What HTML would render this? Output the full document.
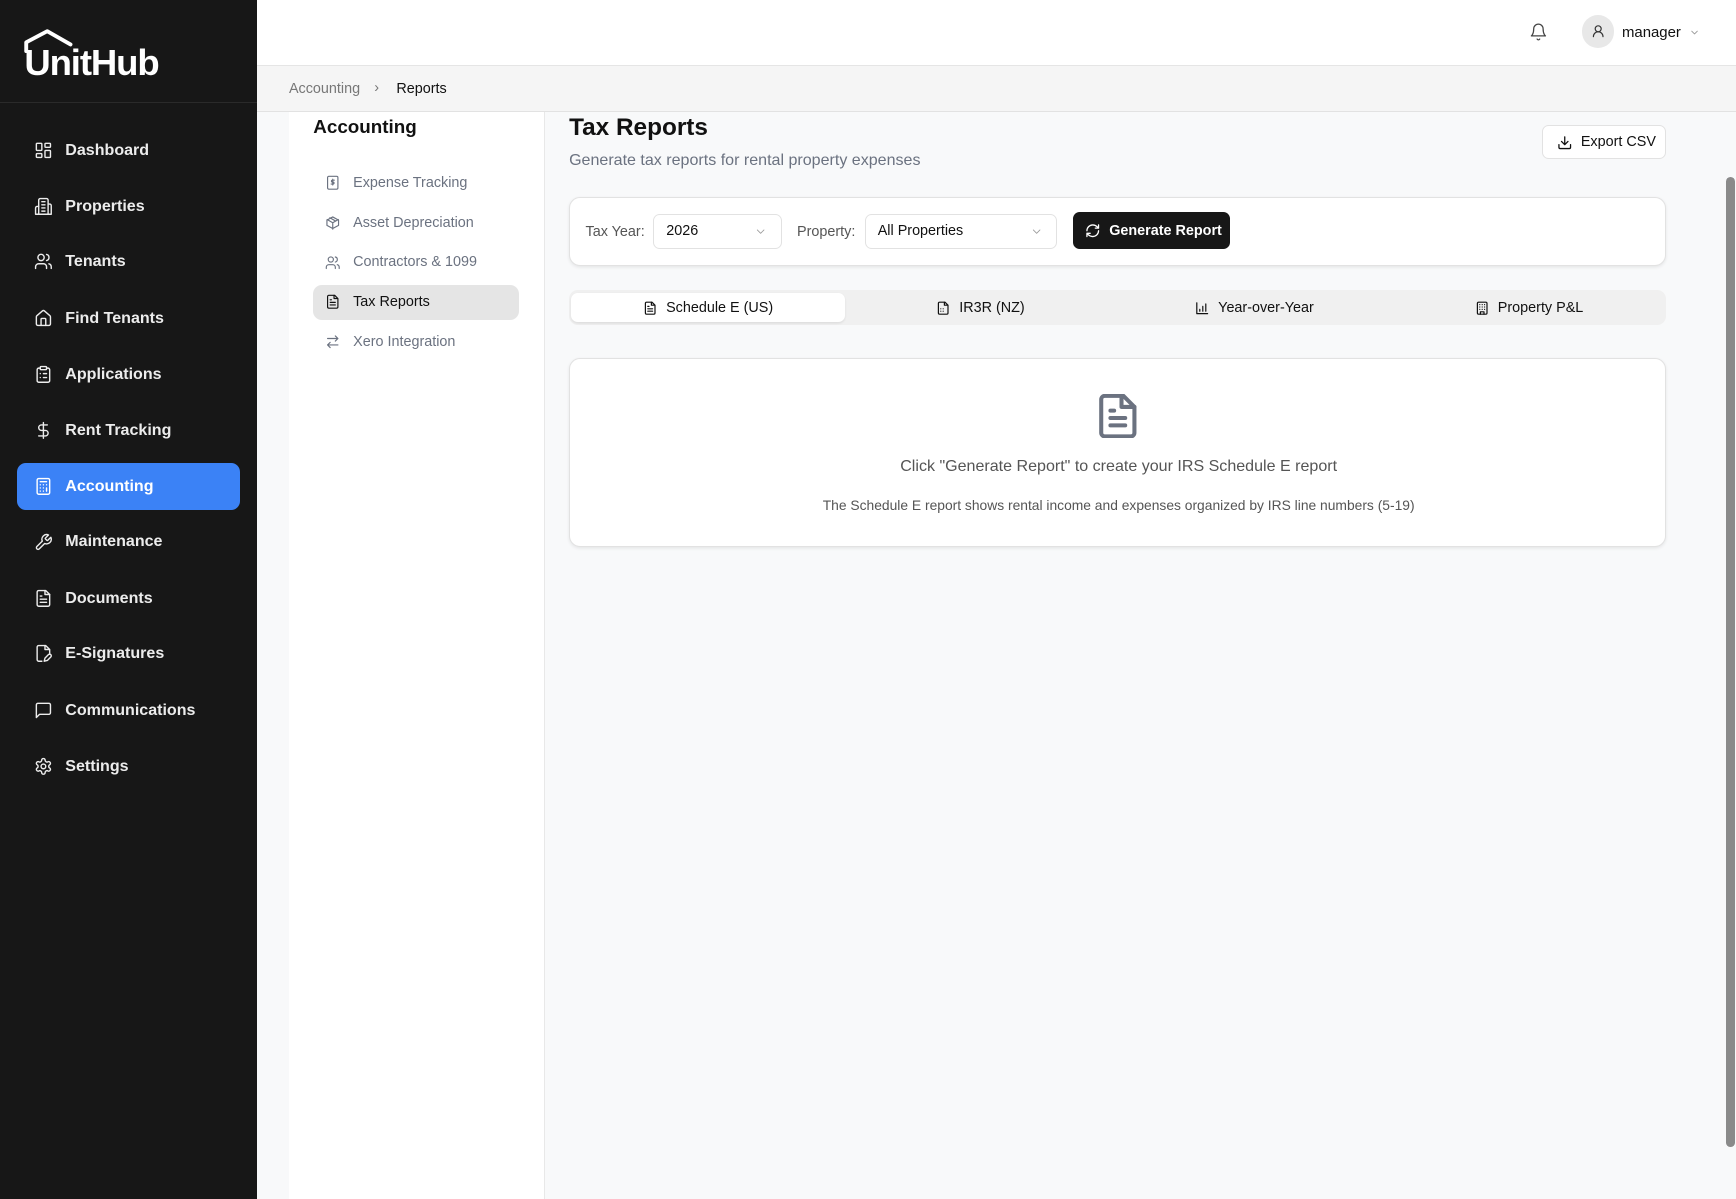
<!DOCTYPE html>
<html><head><meta charset="utf-8"><style>
html{zoom:1.10714}
*{box-sizing:border-box;margin:0;padding:0}
body{width:1568px;height:1083px;overflow:hidden;font-family:"Liberation Sans",sans-serif;background:#f8f9fa;position:relative;color:#111}
.abs{position:absolute}
svg{fill:none;stroke:currentColor;stroke-width:2;stroke-linecap:round;stroke-linejoin:round}
#sb{left:0;top:0;width:232px;height:1083px;background:#171717}
.logo{left:22px;top:38px;color:#fff;font-size:33px;font-weight:bold;letter-spacing:-1px}
.nav{left:15px;width:202px;height:43px;border-radius:8px;color:#ececec;font-size:14.5px;font-weight:bold;display:flex;align-items:center}
.nav svg{width:17px;height:17px;margin-left:16px;margin-right:11px;stroke-width:1.8}
.nav.act{background:#3b82f6;color:#fff}
#hd{left:232px;top:0;width:1336px;height:60px;background:#fff;border-bottom:1px solid #e5e5e5}
#bc{left:232px;top:60px;width:1336px;height:41px;background:#f5f5f5;border-bottom:1px solid #e2e2e2;font-size:13px}
#side2{left:261px;top:101px;width:231px;height:982px;background:#fff;border-right:1px solid #e8e8e8}
.si{left:22px;width:186px;height:32px;border-radius:8px;display:flex;align-items:center;font-size:13px;color:#6b7280}
.si svg{width:14px;height:14px;margin-left:11px;margin-right:11px;stroke-width:1.8}
.si.act{background:#e5e5e5;color:#111}
.card{background:#fff;border:1px solid #e2e2e2;border-radius:10px;box-shadow:0 1px 3px rgba(0,0,0,.08)}
.sel{height:32px;background:#fff;border:1px solid #e2e2e2;border-radius:6px;font-size:13px;display:flex;align-items:center;padding-left:11px}
.sel svg{position:absolute;right:12px;width:12px;height:12px;color:#999;stroke-width:1.5}
.tab{top:0;height:32px;display:flex;align-items:center;justify-content:center;font-size:13px;color:#111}
.tab svg{width:13px;height:13px;margin-right:8px;stroke-width:2}
</style></head><body>
<div id="sb" class="abs">
 <div class="abs logo">UnitHub</div>
 <svg class="abs" style="left:22px;top:26px;width:50px;height:22px;color:#fff;stroke-width:3.5" viewBox="0 0 50 22"><path d="M2 20 V12 L21 2 L42 14"/></svg>
 <div class="abs" style="left:0;top:92px;width:232px;height:1px;background:#2a2a2a"></div>
 <div class="abs nav" style="top:114px"><svg viewBox="0 0 24 24"><rect x="3" y="3" width="7" height="9" rx="1"/><rect x="14" y="3" width="7" height="5" rx="1"/><rect x="14" y="12" width="7" height="9" rx="1"/><rect x="3" y="16" width="7" height="5" rx="1"/></svg>Dashboard</div>
 <div class="abs nav" style="top:165px"><svg viewBox="0 0 24 24"><path d="M6 22V4a2 2 0 0 1 2-2h8a2 2 0 0 1 2 2v18Z"/><path d="M6 12H4a2 2 0 0 0-2 2v8h4M18 9h2a2 2 0 0 1 2 2v11h-4M10 6h4M10 10h4M10 14h4M10 18h4"/></svg>Properties</div>
 <div class="abs nav" style="top:215px"><svg viewBox="0 0 24 24"><path d="M16 21v-2a4 4 0 0 0-4-4H6a4 4 0 0 0-4 4v2"/><circle cx="9" cy="7" r="4"/><path d="M22 21v-2a4 4 0 0 0-3-3.9M16 3.1a4 4 0 0 1 0 7.8"/></svg>Tenants</div>
 <div class="abs nav" style="top:266px"><svg viewBox="0 0 24 24"><path d="M15 21v-8a1 1 0 0 0-1-1h-4a1 1 0 0 0-1 1v8"/><path d="M3 10a2 2 0 0 1 .7-1.5l7-6a2 2 0 0 1 2.6 0l7 6A2 2 0 0 1 21 10v9a2 2 0 0 1-2 2H5a2 2 0 0 1-2-2z"/></svg>Find Tenants</div>
 <div class="abs nav" style="top:317px"><svg viewBox="0 0 24 24"><rect x="8" y="2" width="8" height="4" rx="1"/><path d="M16 4h2a2 2 0 0 1 2 2v14a2 2 0 0 1-2 2H6a2 2 0 0 1-2-2V6a2 2 0 0 1 2-2h2M12 11h4M12 16h4M8 11h.01M8 16h.01"/></svg>Applications</div>
 <div class="abs nav" style="top:367px"><svg viewBox="0 0 24 24"><path d="M12 2v20M17 5H9.5a3.5 3.5 0 0 0 0 7h5a3.5 3.5 0 0 1 0 7H6"/></svg>Rent Tracking</div>
 <div class="abs nav act" style="top:418px"><svg viewBox="0 0 24 24"><rect x="4" y="2" width="16" height="20" rx="2"/><path d="M8 6h8M16 14v4M8 10h.01M12 10h.01M16 10h.01M8 14h.01M12 14h.01M8 18h.01M12 18h.01"/></svg>Accounting</div>
 <div class="abs nav" style="top:468px"><svg viewBox="0 0 24 24"><path d="M14.7 6.3a1 1 0 0 0 0 1.4l1.6 1.6a1 1 0 0 0 1.4 0l3.8-3.8a6 6 0 0 1-7.9 7.9l-6.9 6.9a2.1 2.1 0 0 1-3-3l6.9-6.9a6 6 0 0 1 7.9-7.9z"/></svg>Maintenance</div>
 <div class="abs nav" style="top:519px"><svg viewBox="0 0 24 24"><path d="M15 2H6a2 2 0 0 0-2 2v16a2 2 0 0 0 2 2h12a2 2 0 0 0 2-2V7Z"/><path d="M14 2v5h6M16 13H8M16 17H8M10 9H8"/></svg>Documents</div>
 <div class="abs nav" style="top:569px"><svg viewBox="0 0 24 24"><path d="M20 13V7l-5-5H6a2 2 0 0 0-2 2v16a2 2 0 0 0 2 2h4"/><path d="M14 2v5h5M18.4 13.6a2 2 0 1 1 3 3L17 21l-4 1 1-4Z"/></svg>E-Signatures</div>
 <div class="abs nav" style="top:620px"><svg viewBox="0 0 24 24"><path d="M21 15a2 2 0 0 1-2 2H7l-4 4V5a2 2 0 0 1 2-2h14a2 2 0 0 1 2 2z"/></svg>Communications</div>
 <div class="abs nav" style="top:671px"><svg viewBox="0 0 24 24"><circle cx="12" cy="12" r="3"/><path d="M12.2 2h-.4a2 2 0 0 0-2 2v.2a2 2 0 0 1-1 1.7l-.4.3a2 2 0 0 1-2 0l-.2-.1a2 2 0 0 0-2.7.7l-.2.4a2 2 0 0 0 .7 2.7l.2.1a2 2 0 0 1 1 1.7v.5a2 2 0 0 1-1 1.7l-.2.1a2 2 0 0 0-.7 2.7l.2.4a2 2 0 0 0 2.7.7l.2-.1a2 2 0 0 1 2 0l.4.3a2 2 0 0 1 1 1.7v.2a2 2 0 0 0 2 2h.4a2 2 0 0 0 2-2v-.2a2 2 0 0 1 1-1.7l.4-.3a2 2 0 0 1 2 0l.2.1a2 2 0 0 0 2.7-.7l.2-.4a2 2 0 0 0-.7-2.7l-.2-.1a2 2 0 0 1-1-1.7v-.5a2 2 0 0 1 1-1.7l.2-.1a2 2 0 0 0 .7-2.7l-.2-.4a2 2 0 0 0-2.7-.7l-.2.1a2 2 0 0 1-2 0l-.4-.3a2 2 0 0 1-1-1.7V4a2 2 0 0 0-2-2z"/></svg>Settings</div>
</div>
<div id="hd" class="abs">
 <svg class="abs" style="left:1149px;top:20px;width:17px;height:18px;color:#444;stroke-width:1.6" viewBox="0 0 24 24"><path d="M6 8a6 6 0 0 1 12 0c0 7 3 9 3 9H3s3-2 3-9M10.3 21a1.9 1.9 0 0 0 3.4 0"/></svg>
 <div class="abs" style="left:1197px;top:14px;width:29px;height:29px;border-radius:50%;background:#e8e8e8"></div>
 <svg class="abs" style="left:1205px;top:22px;width:13px;height:13px;color:#333;stroke-width:2" viewBox="0 0 24 24"><circle cx="12" cy="8" r="5"/><path d="M20 21a8 8 0 0 0-16 0"/></svg>
 <div class="abs" style="left:1233px;top:22px;font-size:13.5px;color:#111">manager</div>
 <svg class="abs" style="left:1294px;top:24px;width:10px;height:10px;color:#999;stroke-width:2" viewBox="0 0 24 24"><path d="m6 9 6 6 6-6"/></svg>
</div>
<div id="bc" class="abs">
 <span class="abs" style="left:29px;top:13px;color:#777">Accounting</span>
 <span class="abs" style="left:106px;top:12px;color:#777">›</span>
 <span class="abs" style="left:126px;top:13px;color:#111">Reports</span>
</div>
<div id="side2" class="abs">
 <div class="abs" style="left:22px;top:4px;font-size:17px;font-weight:bold">Accounting</div>
 <div class="abs si" style="top:48px"><svg viewBox="0 0 24 24"><rect x="4" y="2" width="16" height="20" rx="2"/><path d="M14.5 8h-3a1.5 1.5 0 0 0 0 3h1a1.5 1.5 0 0 1 0 3h-3M12 6.5v9"/></svg>Expense Tracking</div>
 <div class="abs si" style="top:84px"><svg viewBox="0 0 24 24"><path d="M21 8l-9-5-9 5v8l9 5 9-5zM3.3 7 12 12l8.7-5M12 22V12M7.5 4.3l9 5.1"/></svg>Asset Depreciation</div>
 <div class="abs si" style="top:120px"><svg viewBox="0 0 24 24"><path d="M16 21v-2a4 4 0 0 0-4-4H6a4 4 0 0 0-4 4v2"/><circle cx="9" cy="7" r="4"/><path d="M22 21v-2a4 4 0 0 0-3-3.9M16 3.1a4 4 0 0 1 0 7.8"/></svg>Contractors &amp; 1099</div>
 <div class="abs si act" style="top:156px"><svg viewBox="0 0 24 24"><path d="M15 2H6a2 2 0 0 0-2 2v16a2 2 0 0 0 2 2h12a2 2 0 0 0 2-2V7Z"/><path d="M14 2v5h5M16 13H8M16 17H8M10 9H8"/></svg>Tax Reports</div>
 <div class="abs si" style="top:192px"><svg viewBox="0 0 24 24"><path d="m16 3 4 4-4 4M20 7H4M8 21l-4-4 4-4M4 17h16"/></svg>Xero Integration</div>
</div>
<div class="abs" style="left:514px;top:103px;font-size:22px;font-weight:bold">Tax Reports</div>
<div class="abs" style="left:514px;top:136px;font-size:14.5px;color:#6b7280">Generate tax reports for rental property expenses</div>
<div class="abs card" style="left:1393px;top:113px;width:112px;height:31px;border-radius:6px;box-shadow:none;display:flex;align-items:center;font-size:13px">
 <svg style="width:14px;height:14px;margin-left:12px;margin-right:8px" viewBox="0 0 24 24"><path d="M21 15v4a2 2 0 0 1-2 2H5a2 2 0 0 1-2-2v-4M7 10l5 5 5-5M12 15V3"/></svg>Export CSV</div>
<div class="abs card" style="left:514px;top:178px;width:991px;height:62px">
 <span class="abs" style="left:14px;top:23px;font-size:13px;color:#555">Tax Year:</span>
 <div class="abs sel" style="left:75px;top:14px;width:116px">2026<svg viewBox="0 0 24 24"><path d="m6 9 6 6 6-6"/></svg></div>
 <span class="abs" style="left:205px;top:23px;font-size:13px;color:#555">Property:</span>
 <div class="abs sel" style="left:266px;top:14px;width:174px">All Properties<svg viewBox="0 0 24 24"><path d="m6 9 6 6 6-6"/></svg></div>
 <div class="abs" style="left:454px;top:13px;width:142px;height:33px;background:#171717;border-radius:6px;color:#fff;font-size:13px;font-weight:bold;display:flex;align-items:center">
  <svg style="width:14px;height:14px;margin-left:11px;margin-right:8px" viewBox="0 0 24 24"><path d="M3 12a9 9 0 0 1 9-9 9.8 9.8 0 0 1 6.7 2.7L21 8M21 3v5h-5M21 12a9 9 0 0 1-9 9 9.8 9.8 0 0 1-6.7-2.7L3 16M8 16H3v5"/></svg>Generate Report</div>
</div>
<div class="abs" style="left:514px;top:262px;width:991px;height:32px;background:#f0f0f0;border-radius:8px">
 <div class="abs" style="left:2px;top:3px;width:247px;height:26px;background:#fff;border-radius:6px;box-shadow:0 1px 2px rgba(0,0,0,.08)"></div>
 <div class="abs tab" style="left:0;width:251px"><svg viewBox="0 0 24 24"><path d="M15 2H6a2 2 0 0 0-2 2v16a2 2 0 0 0 2 2h12a2 2 0 0 0 2-2V7Z"/><path d="M14 2v5h5M16 13H8M16 17H8M10 9H8"/></svg>Schedule E (US)</div>
 <div class="abs tab" style="left:248px;width:247px"><svg viewBox="0 0 24 24"><path d="M15 2H6a2 2 0 0 0-2 2v16a2 2 0 0 0 2 2h12a2 2 0 0 0 2-2V7Z"/><path d="M14 2v5h5M8 13h.01M12 13h.01M8 17h.01M12 17h.01"/></svg>IR3R (NZ)</div>
 <div class="abs tab" style="left:495px;width:248px"><svg viewBox="0 0 24 24"><path d="M3 3v18h18M8 17v-3M13 17V9M18 17V5"/></svg>Year-over-Year</div>
 <div class="abs tab" style="left:743px;width:248px"><svg viewBox="0 0 24 24"><rect x="4" y="2" width="16" height="20" rx="2"/><path d="M9 22v-4h6v4M8 6h.01M16 6h.01M12 6h.01M12 10h.01M12 14h.01M16 10h.01M16 14h.01M8 10h.01M8 14h.01"/></svg>Property P&amp;L</div>
</div>
<div class="abs card" style="left:514px;top:323px;width:991px;height:171px">
 <svg class="abs" style="left:478px;top:32px;width:34px;height:40px;color:#6b7280;stroke-width:2.2" viewBox="0 0 20 24"><path d="M13 1H3a2 2 0 0 0-2 2v18a2 2 0 0 0 2 2h14a2 2 0 0 0 2-2V7Z"/><path d="M12 1v6h7M14 13H6M14 17H6M8 9H6"/></svg>
 <div class="abs" style="left:0;width:991px;top:89px;text-align:center;font-size:14.5px;color:#555">Click "Generate Report" to create your IRS Schedule E report</div>
 <div class="abs" style="left:0;width:991px;top:125px;text-align:center;font-size:12.5px;color:#555">The Schedule E report shows rental income and expenses organized by IRS line numbers (5-19)</div>
</div>
<div class="abs" style="left:1559px;top:160px;width:8px;height:876px;background:#8a8a8a;border-radius:4px"></div>
</body></html>
